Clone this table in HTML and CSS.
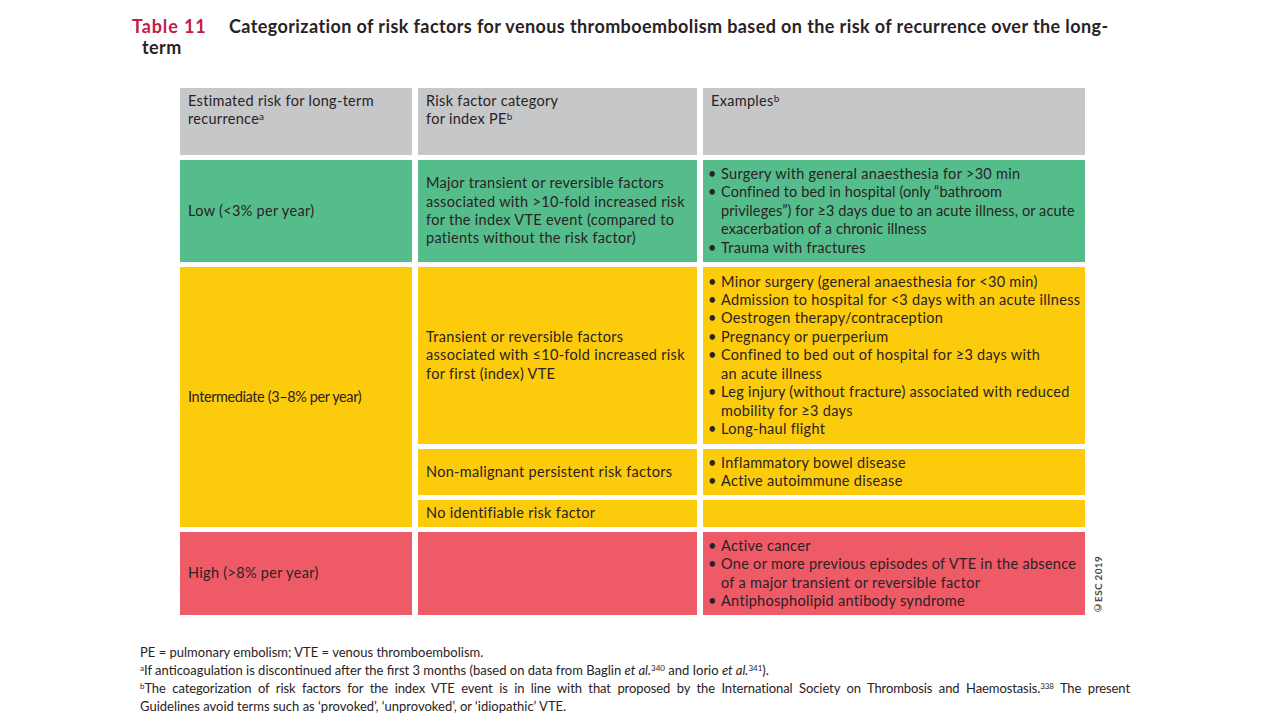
FILE: index.html
```html
<!DOCTYPE html>
<html lang="en">
<head>
<meta charset="utf-8">
<title>Table 11</title>
<link rel="stylesheet" href="styles.css">
</head>
<body>
<div class="page">
  <h1 class="caption">
    <span class="label">Table 11</span><span class="title">Categorization of risk factors for venous thromboembolism based on the risk of recurrence over the long-</span><br><span class="title-cont">term</span>
  </h1>

  <div class="table-wrap">
    <div class="grid">
      <div class="cell head">Estimated risk for long-term recurrence<sup>a</sup></div>
      <div class="cell head">Risk factor category<br>for index PE<sup>b</sup></div>
      <div class="cell head">Examples<sup>b</sup></div>

      <div class="cell green mid">Low (&lt;3% per year)</div>
      <div class="cell green mid">Major transient or reversible factors associated with &gt;10-fold increased risk for the index VTE event (compared to patients without the risk factor)</div>
      <div class="cell green mid ex">
        <ul>
          <li>Surgery with general anaesthesia for &gt;30 min</li>
          <li><span class="tight">Confined to bed in hospital (only “bathroom<br>privileges”) for ≥3 days due to an acute illness, or acute<br>exacerbation of a chronic illness</span></li>
          <li>Trauma with fractures</li>
        </ul>
      </div>

      <div class="cell yellow mid span3 narrow">Intermediate (3–8% per year)</div>
      <div class="cell yellow mid">Transient or reversible factors associated with ≤10-fold increased risk for first (index) VTE</div>
      <div class="cell yellow mid ex">
        <ul>
          <li>Minor surgery (general anaesthesia for &lt;30 min)</li>
          <li>Admission to hospital for &lt;3 days with an acute illness</li>
          <li>Oestrogen therapy/contraception</li>
          <li>Pregnancy or puerperium</li>
          <li><span>Confined to bed out of hospital for ≥3 days with<br>an acute illness</span></li>
          <li>Leg injury (without fracture) associated with reduced mobility for ≥3 days</li>
          <li>Long-haul flight</li>
        </ul>
      </div>
      <div class="cell yellow mid">Non-malignant persistent risk factors</div>
      <div class="cell yellow mid ex">
        <ul>
          <li>Inflammatory bowel disease</li>
          <li>Active autoimmune disease</li>
        </ul>
      </div>
      <div class="cell yellow mid">No identifiable risk factor</div>
      <div class="cell yellow"></div>

      <div class="cell red mid">High (&gt;8% per year)</div>
      <div class="cell red"></div>
      <div class="cell red mid ex">
        <ul>
          <li>Active cancer</li>
          <li><span>One or more previous episodes of VTE in the absence<br>of a major transient or reversible factor</span></li>
          <li>Antiphospholipid antibody syndrome</li>
        </ul>
      </div>
    </div>
    <div class="copyright">©ESC 2019</div>
  </div>

  <div class="notes">
    <p>PE = pulmonary embolism; VTE = venous thromboembolism.</p>
    <p><sup>a</sup>If anticoagulation is discontinued after the first 3 months (based on data from Baglin <i>et al.</i><sup>340</sup> and Iorio <i>et al.</i><sup>341</sup>).</p>
    <p><span class="full"><sup>b</sup>The categorization of risk factors for the index VTE event is in line with that proposed by the International Society on Thrombosis and Haemostasis.<sup>338</sup> The present</span><span>Guidelines avoid terms such as ‘provoked’, ‘unprovoked’, or ‘idiopathic’ VTE.</span></p>
  </div>
</div>
</body>
</html>
```

FILE: styles.css
```css
html, body {
  margin: 0;
  padding: 0;
  background: #ffffff;
}

body {
  font-family: Lato, "Open Sans", "Liberation Sans", sans-serif;
  color: #2a2224;
}

.page {
  width: 1280px;
  height: 720px;
  overflow: hidden;
  padding-top: 16px;
  box-sizing: border-box;
}

.caption {
  margin: 0 0 0 132px;
  font-size: 18px;
  font-weight: 700;
  line-height: 21px;
  letter-spacing: 0.4px;
  color: #2a2224;
}

.caption .label {
  color: #c31a44;
  display: inline-block;
  width: 97px;
  letter-spacing: 0.9px;
}

.caption .title-cont {
  display: inline-block;
  padding-left: 10px;
}

.table-wrap {
  display: flex;
  align-items: flex-end;
  gap: 7px;
  margin: 30px 0 0 180px;
}

.grid {
  display: grid;
  grid-template-columns: 232px 279px 382px;
  grid-template-rows: 67px 102px 177px 46px 27px 83px;
  column-gap: 6px;
  row-gap: 5px;
  font-size: 14.5px;
  letter-spacing: 0.3px;
  line-height: 18.4px;
}

.cell {
  padding: 5px 8px;
  box-sizing: border-box;
}

.cell sup {
  font-size: 10px;
  line-height: 0;
  vertical-align: 4px;
}

.head {
  background: #c5c7c9;
  padding-top: 4px;
}

.green { background: #55bd8c; }
.yellow { background: #fccb0c; }
.red { background: #ef5a67; }

.mid {
  display: flex;
  flex-direction: column;
  justify-content: center;
}

.span3 {
  grid-row: span 3;
}

.narrow {
  letter-spacing: -0.4px;
}

.ex {
  padding-left: 5px;
  padding-right: 2px;
}

.ex ul {
  list-style: none;
  margin: 0;
  padding: 0;
}

.ex li {
  display: flex;
}

.ex li::before {
  content: "•";
  flex: 0 0 13px;
  width: 13px;
}

.ex .tight {
  white-space: nowrap;
  letter-spacing: 0.1px;
}

.copyright {
  writing-mode: vertical-rl;
  transform: rotate(180deg);
  font-size: 10px;
  font-weight: 700;
  letter-spacing: 0.3px;
  color: #4d4a4b;
  margin-bottom: 1px;
}

.notes {
  margin: 28px 0 0 140px;
  width: 990px;
  font-size: 13px;
  line-height: 18px;
  color: #2a2224;
}

.notes p {
  margin: 0;
}

.notes .full {
  display: block;
  text-align: justify;
  text-align-last: justify;
  white-space: nowrap;
  letter-spacing: -0.1px;
}

.notes sup {
  font-size: 8px;
  line-height: 0;
  vertical-align: 4px;
}
```
